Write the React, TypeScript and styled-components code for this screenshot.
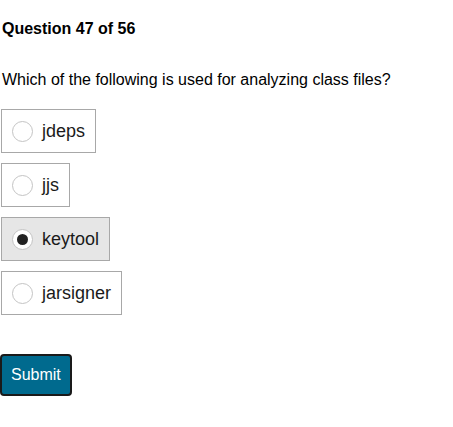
import React, { useState } from 'react';
import styled, { createGlobalStyle } from 'styled-components';

const GlobalStyle = createGlobalStyle`
  body {
    margin: 0;
    background: #ffffff;
    font-family: "Liberation Sans", Arial, sans-serif;
    color: #000000;
  }
`;

const Page = styled.div`
  padding: 20px 0 0 1px;
`;

const Title = styled.h2`
  margin: 0 0 0 1px;
  font-size: 16px;
  font-weight: bold;
  line-height: 17px;
`;

const Prompt = styled.p`
  margin: 34px 0 0 1px;
  font-size: 16px;
  line-height: 18px;
`;

const Options = styled.div`
  display: flex;
  flex-direction: column;
  align-items: flex-start;
  gap: 10px;
  margin-top: 20px;
`;

const Option = styled.label<{ $checked: boolean }>`
  display: flex;
  align-items: center;
  gap: 9px;
  height: 44px;
  box-sizing: border-box;
  padding: 0 10px 0 10px;
  border: 1px solid #a8a8a8;
  background: ${({ $checked }) => ($checked ? '#e6e6e6' : '#ffffff')};
  font-size: 18px;
  color: #1a1a1a;
  cursor: pointer;
`;

const Radio = styled.span<{ $checked: boolean }>`
  width: 21px;
  height: 21px;
  box-sizing: border-box;
  border-radius: 50%;
  border: 1px solid #c4c4c4;
  background: #ffffff;
  display: flex;
  align-items: center;
  justify-content: center;
  &::after {
    content: '';
    width: 11px;
    height: 11px;
    border-radius: 50%;
    background: #222222;
    display: ${({ $checked }) => ($checked ? 'block' : 'none')};
  }
`;

const Submit = styled.button`
  margin-top: 39px;
  margin-left: -1px;
  padding: 0 9px;
  height: 42px;
  background: #006a8e;
  color: #ffffff;
  border: 2px solid #1a1a1a;
  border-radius: 4px;
  font-family: "Liberation Sans", Arial, sans-serif;
  font-size: 16px;
  cursor: pointer;
`;

const choices = ['jdeps', 'jjs', 'keytool', 'jarsigner'];

const App = () => {
  const [picked, setPicked] = useState('keytool');

  return (
    <>
      <GlobalStyle />
      <Page>
        <Title>Question 47 of 56</Title>
        <Prompt>Which of the following is used for analyzing class files?</Prompt>
        <Options>
          {choices.map((c) => (
            <Option key={c} $checked={picked === c} onClick={() => setPicked(c)}>
              <Radio $checked={picked === c} />
              {c}
            </Option>
          ))}
        </Options>
        <Submit>Submit</Submit>
      </Page>
    </>
  );
};

export default App;
